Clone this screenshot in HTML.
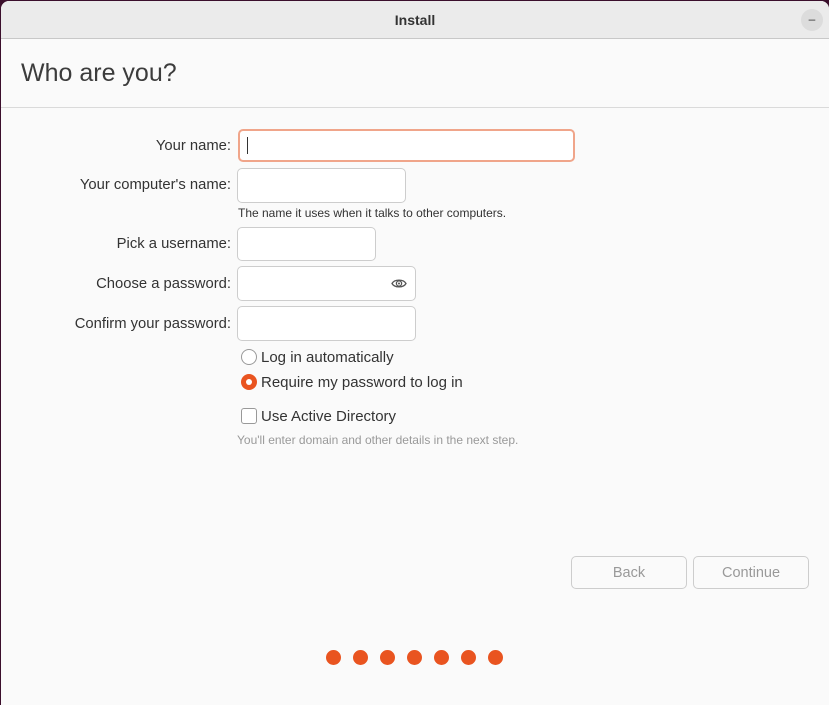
<!DOCTYPE html>
<html><head><style>
body{margin:0;width:829px;height:705px;background:#3b0f2c;font-family:"Liberation Sans",sans-serif;overflow:hidden;position:relative}
.win{position:absolute;left:1px;top:1px;width:828px;height:704px;background:#fafafa;border-radius:8px 8px 0 0;overflow:hidden}
.tb{height:37px;background:#ebebeb;border-bottom:1px solid #c8c8c8;text-align:center;line-height:38px;font-size:14px;font-weight:bold;color:#333}
.min{position:absolute;right:6px;top:8px;width:22px;height:22px;border-radius:50%;background:#dcdcdc;font-size:12px;line-height:20px;text-align:center;color:#333}
h1{position:absolute;left:20px;top:58px;margin:0;font-weight:normal;font-size:25px;color:#3c3c3c}
.hr{position:absolute;left:0;top:106px;width:100%;height:1px;background:#dadada}
.l{position:absolute;right:598px;font-size:14.8px;color:#333;white-space:nowrap}
.i{position:absolute;border:1px solid #cdcdcd;border-radius:5px;background:#fff;box-sizing:border-box}
.s{position:absolute;font-size:12px;color:#333}
.t{position:absolute;font-size:15px;color:#333;left:260px}
.dot{position:absolute;top:649px;width:15px;height:15px;border-radius:50%;background:#e95420}
.btn{position:absolute;top:555px;height:33px;border:1px solid #cdcdcd;border-radius:5px;box-sizing:border-box;text-align:center;line-height:32px;font-size:14.5px;color:#999;background:#fafafa}
</style></head><body><div class="win">
<div class="tb">Install</div><div class="min">–</div>
<h1>Who are you?</h1><div class="hr"></div>
<div class="l" style="top:137px">Your name:</div>
<div class="i" style="left:237px;top:128px;width:337px;height:33px;border:2px solid #f0a58a"><div style="position:absolute;left:7px;top:6px;width:1px;height:17px;background:#333"></div></div>
<div class="l" style="top:176px">Your computer's name:</div>
<div class="i" style="left:236px;top:167px;width:169px;height:35px"></div>
<div class="s" style="left:237px;top:205px">The name it uses when it talks to other computers.</div>
<div class="l" style="top:235px">Pick a username:</div>
<div class="i" style="left:236px;top:226px;width:139px;height:34px"></div>
<div class="l" style="top:275px">Choose a password:</div>
<div class="i" style="left:236px;top:265px;width:179px;height:35px"><svg style="position:absolute;right:8px;top:10px" width="16" height="13" viewBox="0 0 16 13"><path d="M1 6.5C3.5 2 12.5 2 15 6.5C12.5 11 3.5 11 1 6.5Z" fill="none" stroke="#555" stroke-width="1.3"/><circle cx="8" cy="6.5" r="2.6" fill="none" stroke="#555" stroke-width="1.3"/><circle cx="8" cy="6.5" r="1" fill="#555"/></svg></div>
<div class="l" style="top:315px">Confirm your password:</div>
<div class="i" style="left:236px;top:305px;width:179px;height:35px"></div>
<div style="position:absolute;left:240px;top:348px;width:14px;height:14px;border:1px solid #999;border-radius:50%;background:#fff"></div>
<div class="t" style="top:348px">Log in automatically</div>
<div style="position:absolute;left:240px;top:373px;width:16px;height:16px;border-radius:50%;background:#e95420"><div style="position:absolute;left:5px;top:5px;width:6px;height:6px;border-radius:50%;background:#fff"></div></div>
<div class="t" style="top:373px">Require my password to log in</div>
<div style="position:absolute;left:240px;top:407px;width:14px;height:14px;border:1px solid #999;border-radius:3px;background:#fff"></div>
<div class="t" style="top:407px">Use Active Directory</div>
<div class="s" style="left:236px;top:432px;color:#999">You'll enter domain and other details in the next step.</div>
<div class="btn" style="left:570px;width:116px">Back</div>
<div class="btn" style="left:692px;width:116px">Continue</div>
<div class="dot" style="left:325px"></div><div class="dot" style="left:352px"></div><div class="dot" style="left:379px"></div><div class="dot" style="left:406px"></div><div class="dot" style="left:433px"></div><div class="dot" style="left:460px"></div><div class="dot" style="left:487px"></div>
</div></body></html>
